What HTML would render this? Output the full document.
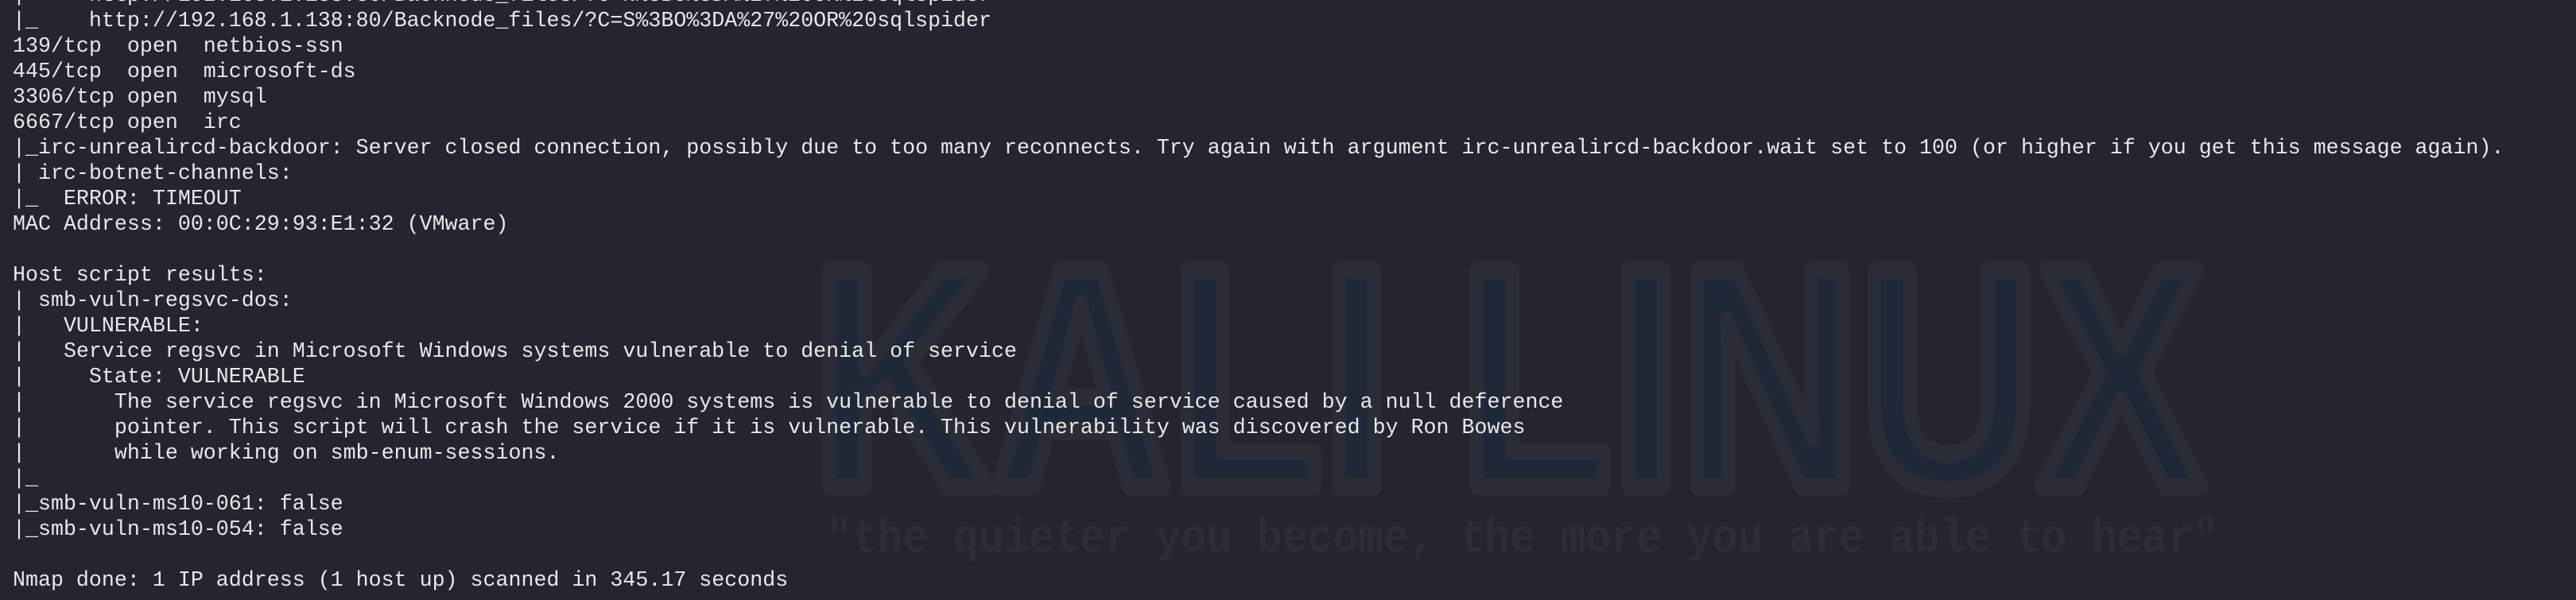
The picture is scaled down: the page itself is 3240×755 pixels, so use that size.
<!DOCTYPE html>
<html><head><meta charset="utf-8"><style>
html,body{margin:0;padding:0;}
body{width:3240px;height:755px;overflow:hidden;background:#23252f;position:relative;}
svg{position:absolute;left:0;top:0;}
pre{position:absolute;left:16px;top:-21px;margin:0;font-family:"Liberation Mono","DejaVu Sans Mono",monospace;font-size:26.65px;line-height:32px;color:#e8e8ea;white-space:pre;}
</style></head><body>
<svg width="3240" height="755" viewBox="0 0 3240 755">
<text x="1022" y="612" font-family="Liberation Sans Narrow, Liberation Sans, sans-serif" font-weight="bold" font-size="395" textLength="1750" lengthAdjust="spacingAndGlyphs" fill="#1e2838" stroke="#2a2d38" stroke-width="22" stroke-linejoin="round">KALI LINUX</text>
<text x="1040" y="694" font-family="Liberation Mono, monospace" font-weight="bold" font-size="60" textLength="1750" lengthAdjust="spacingAndGlyphs" fill="#2b2e39">"the quieter you become, the more you are able to hear"</text>
</svg>
<pre>|     http://192.168.1.138:80/Backnode_files/?C=N%3BO%3DA%27%20OR%20sqlspider
|_    http://192.168.1.138:80/Backnode_files/?C=S%3BO%3DA%27%20OR%20sqlspider
139/tcp  open  netbios-ssn
445/tcp  open  microsoft-ds
3306/tcp open  mysql
6667/tcp open  irc
|_irc-unrealircd-backdoor: Server closed connection, possibly due to too many reconnects. Try again with argument irc-unrealircd-backdoor.wait set to 100 (or higher if you get this message again).
| irc-botnet-channels: 
|_  ERROR: TIMEOUT
MAC Address: 00:0C:29:93:E1:32 (VMware)

Host script results:
| smb-vuln-regsvc-dos: 
|   VULNERABLE:
|   Service regsvc in Microsoft Windows systems vulnerable to denial of service
|     State: VULNERABLE
|       The service regsvc in Microsoft Windows 2000 systems is vulnerable to denial of service caused by a null deference
|       pointer. This script will crash the service if it is vulnerable. This vulnerability was discovered by Ron Bowes
|       while working on smb-enum-sessions.
|_      
|_smb-vuln-ms10-061: false
|_smb-vuln-ms10-054: false

Nmap done: 1 IP address (1 host up) scanned in 345.17 seconds</pre>
</body></html>
